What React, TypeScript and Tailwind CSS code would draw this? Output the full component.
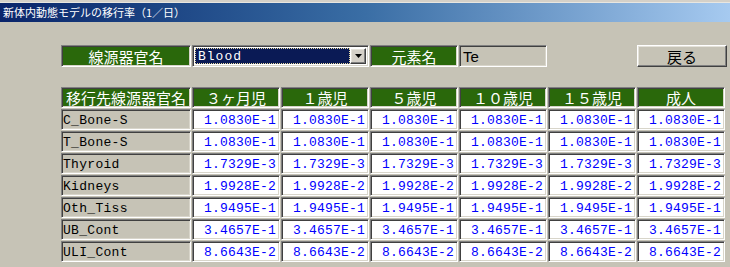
import React from 'react';

const sunken =
  'border border-t-[#808080] border-l-[#808080] border-b-white border-r-white shadow-[inset_1px_1px_0_#404040,inset_-1px_-1px_0_#d8d5ca]';
const raised =
  'border border-t-white border-l-white border-b-[#404040] border-r-[#404040] shadow-[inset_-1px_-1px_0_#808080,inset_1px_1px_0_#e4e2da]';

const cjk = "font-['Noto_Sans_CJK_JP',sans-serif]";
const mono = "font-['Liberation_Mono','Noto_Sans_CJK_JP',monospace]";

const grid = 'grid grid-cols-[130px_88px_88px_88px_88px_88px_88px] gap-x-px';

const headers = ['移行先線源器官名', '３ヶ月児', '１歳児', '５歳児', '１０歳児', '１５歳児', '成人'];

const rows: [string, string][] = [
  ['C_Bone-S', '1.0830E-1'],
  ['T_Bone-S', '1.0830E-1'],
  ['Thyroid', '1.7329E-3'],
  ['Kidneys', '1.9928E-2'],
  ['Oth_Tiss', '1.9495E-1'],
  ['UB_Cont', '3.4657E-1'],
  ['ULI_Cont', '8.6643E-2'],
];

function GreenLabel({ text, className = '' }: { text: string; className?: string }) {
  return (
    <div
      className={`${sunken} ${cjk} bg-[#2a680b] text-white text-[15px] leading-none flex items-center justify-center ${className}`}
    >
      {text}
    </div>
  );
}

export default function App() {
  return (
    <div className="w-[730px] h-[267px] bg-[#c6c3b6] overflow-hidden">
      {/* window edge */}
      <div className="h-[3px] bg-[#d4d0c8] border-b border-b-[#e8e6e0]" />

      {/* title bar */}
      <div
        className={`h-[19px] bg-gradient-to-r from-[#0a246a] via-[#3a6ea5] to-[#a6caf0] flex items-center pl-[3px] ${cjk} text-white text-[11px] leading-none`}
      >
        新体内動態モデルの移行率（1／日）
      </div>

      <div className="pl-[61px] pt-[23px]">
        {/* controls row */}
        <div className={`${grid} h-[22px]`}>
          <GreenLabel text="線源器官名" />
          <div className={`${sunken} col-span-2 bg-white flex p-[2px]`}>
            <div className="flex-1 bg-[#0a1a55] border border-dotted border-[#e6d9a0] flex items-center pl-[2px]">
              <span className={`${mono} font-normal text-white text-[13px] leading-none tracking-[1px]`}>Blood</span>
            </div>
            <div className={`${raised} w-[16px] bg-[#d4d0c8] flex items-center justify-center`}>
              <svg width="7" height="4" viewBox="0 0 7 4">
                <path d="M0 0h7L3.5 4z" fill="#000" />
              </svg>
            </div>
          </div>
          <GreenLabel text="元素名" />
          <div className={`${sunken} flex items-center pl-[3px]`}>
            <span className="font-['Liberation_Sans',sans-serif] text-[15px] leading-none text-black">Te</span>
          </div>
          <div />
          <button
            className={`${raised} w-[90px] bg-[#c6c3b6] ${cjk} text-[15px] leading-none text-black flex items-center justify-center`}
          >
            戻る
          </button>
        </div>

        {/* table */}
        <div className={`${grid} gap-y-px mt-[20px] auto-rows-[21px]`}>
          {headers.map((h) => (
            <GreenLabel key={h} text={h} />
          ))}
          {rows.map(([name, val]) => (
            <React.Fragment key={name}>
              <div className={`${sunken} ${mono} text-[13px] leading-none text-black flex items-center pl-[1px] pt-[1px] tracking-[0.3px]`}>
                {name}
              </div>
              {[0, 1, 2, 3, 4, 5].map((i) => (
                <div
                  key={i}
                  className={`${sunken} bg-white ${mono} text-[13px] leading-none text-[#0000ff] flex items-center justify-end pr-[3px] pt-[1px] tracking-[0.2px]`}
                >
                  {val}
                </div>
              ))}
            </React.Fragment>
          ))}
        </div>
      </div>
    </div>
  );
}
